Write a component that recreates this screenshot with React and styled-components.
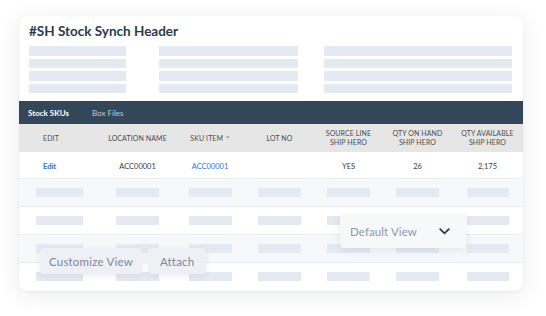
import React from 'react'
import styled, { createGlobalStyle } from 'styled-components'

const GlobalStyle = createGlobalStyle`
  html, body {
    margin: 0;
    padding: 0;
    background: #ffffff;
    font-family: Lato, "Open Sans", sans-serif;
  }
`

const Page = styled.div`
  width: 546px;
  height: 316px;
  box-sizing: border-box;
  padding: 16px 23px 0 19px;
`

const Card = styled.div`
  position: relative;
  width: 504px;
  height: 275px;
  background: #ffffff;
  border-radius: 8px;
  overflow: hidden;
  box-shadow: 0 4px 22px rgba(30, 40, 60, 0.09), 0 1px 3px rgba(30, 40, 60, 0.05);
`

const HeaderSection = styled.div`
  padding: 7px 11px 0 10px;
  height: 85px;
  box-sizing: border-box;
`

const Title = styled.h1`
  margin: 0 0 7px;
  font-size: 13.5px;
  line-height: 16px;
  font-weight: 700;
  color: #2b3a4d;
`

const BarColumns = styled.div`
  display: flex;
`

const BarStack = styled.div`
  display: flex;
  flex-direction: column;
  gap: 3px;
  width: ${p => p.w}px;
  margin-left: ${p => p.ml || 0}px;
`

const Bar = styled.div`
  height: ${p => p.h || 9.5}px;
  width: ${p => p.w ? `${p.w}px` : '100%'};
  background: #e5e9f1;
`

const Tabs = styled.div`
  display: flex;
  align-items: center;
  gap: 23px;
  height: 23px;
  padding-left: 9px;
  background: #33465a;
  font-size: 8px;
`

const Tab = styled.span`
  color: ${p => p.active ? '#ffffff' : '#c3cad3'};
  font-weight: ${p => p.active ? 700 : 400};
`

const Row = styled.div`
  display: grid;
  grid-template-columns: 81px 75px 70px 69px 69px 69px 71px;
  align-items: center;
  height: ${p => p.h}px;
  background: ${p => p.bg || '#ffffff'};
  border-top: ${p => p.line ? '1px solid #e9ecf1' : 'none'};
  box-sizing: border-box;
`

const HeadCell = styled.div`
  text-align: ${p => p.left ? 'left' : 'center'};
  padding-left: ${p => p.left ? '24px' : '0'};
  font-size: 7px;
  line-height: 9px;
  color: #4d4d4d;
  text-transform: uppercase;
  letter-spacing: 0.1px;
`

const Cell = styled.div`
  text-align: ${p => p.left ? 'left' : 'center'};
  padding-left: ${p => p.left ? '24px' : '0'};
  font-size: 7.5px;
  color: ${p => p.link ? '#2f6fd6' : '#3a3a3a'};
  font-weight: ${p => p.bold ? 700 : 400};
  padding-top: 2px;
`

const BarCell = styled.div`
  display: flex;
  justify-content: center;
`

const Caret = styled.span`
  font-size: 6px;
  margin-left: 3px;
  position: relative;
  top: -1px;
`

const ButtonRow = styled.div`
  position: absolute;
  left: 21px;
  top: 232px;
  display: flex;
  gap: 6px;
`

const GhostButton = styled.div`
  height: 26px;
  padding: 0 ${p => p.pad}px;
  display: flex;
  align-items: center;
  background: #eef0f5;
  border-radius: 4px;
  box-shadow: 0 2px 6px rgba(40, 50, 80, 0.08);
  color: #7b8799;
  font-size: 11.5px;
  letter-spacing: 0.2px;
`

const Dropdown = styled.div`
  position: absolute;
  left: 321px;
  top: 199px;
  width: 126px;
  height: 33px;
  box-sizing: border-box;
  padding: 0 16px 0 10px;
  display: flex;
  align-items: center;
  justify-content: space-between;
  background: #f7f8fa;
  border-radius: 4px;
  box-shadow: 0 2px 8px rgba(40, 50, 80, 0.1);
  color: #8d97a8;
  font-size: 11.5px;
  letter-spacing: 0.1px;
`

const barWidths = [47, 43, 43, 43, 43, 43, 42]

function PlaceholderRow({ bg }) {
  return (
    <Row h={28} bg={bg} line>
      {barWidths.map((w, i) => (
        <BarCell key={i}>
          <Bar w={w} h={8.5} />
        </BarCell>
      ))}
    </Row>
  )
}

function BarGroup(props) {
  return (
    <BarStack {...props}>
      <Bar /><Bar /><Bar /><Bar />
    </BarStack>
  )
}

export default function App() {
  return (
    <>
      <GlobalStyle />
      <Page>
        <Card>
          <HeaderSection>
            <Title>#SH Stock Synch Header</Title>
            <BarColumns>
              <BarGroup w={97} />
              <BarGroup w={139} ml={33} />
              <BarGroup w={188} ml={26} />
            </BarColumns>
          </HeaderSection>

          <Tabs>
            <Tab active>Stock SKUs</Tab>
            <Tab>Box Files</Tab>
          </Tabs>

          <Row h={28} bg="#e6e6e6">
            <HeadCell left>Edit</HeadCell>
            <HeadCell>Location Name</HeadCell>
            <HeadCell>SKU Item<Caret>^</Caret></HeadCell>
            <HeadCell>Lot No</HeadCell>
            <HeadCell>Source Line<br />Ship Hero</HeadCell>
            <HeadCell>Qty On Hand<br />Ship Hero</HeadCell>
            <HeadCell>Qty Available<br />Ship Hero</HeadCell>
          </Row>

          <Row h={26}>
            <Cell left link bold>Edit</Cell>
            <Cell>ACC00001</Cell>
            <Cell link>ACC00001</Cell>
            <Cell></Cell>
            <Cell>YES</Cell>
            <Cell>26</Cell>
            <Cell>2,175</Cell>
          </Row>

          <PlaceholderRow bg="#f7f8fa" />
          <PlaceholderRow bg="#ffffff" />
          <PlaceholderRow bg="#f7f8fa" />
          <PlaceholderRow bg="#ffffff" />

          <ButtonRow>
            <GhostButton pad={9}>Customize View</GhostButton>
            <GhostButton pad={12}>Attach</GhostButton>
          </ButtonRow>

          <Dropdown>
            <span>Default View</span>
            <svg width="11" height="7" viewBox="0 0 11 7" fill="none">
              <path d="M1.2 1.2 L5.5 5.4 L9.8 1.2" stroke="#2b3a4d" strokeWidth="1.8" strokeLinecap="round" strokeLinejoin="round" />
            </svg>
          </Dropdown>
        </Card>
      </Page>
    </>
  )
}
